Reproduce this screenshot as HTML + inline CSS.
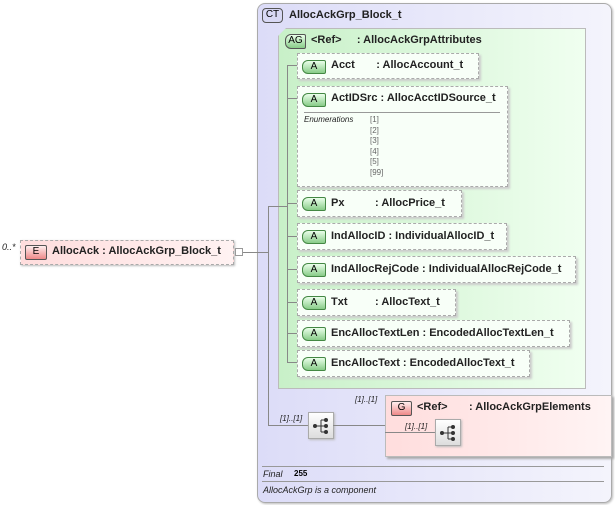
<!DOCTYPE html>
<html><head><style>
body{margin:0;width:615px;height:505px;background:#fff;font-family:"Liberation Sans",sans-serif;position:relative;overflow:hidden}
.a{position:absolute}
.b{font-weight:bold;font-size:11px;color:#222}
.badge{position:absolute;font-size:10px;text-align:center;border:1px solid #555;line-height:12px}
.attr{position:absolute;border:1px dashed #aaa;background:#f8fff8;box-shadow:2px 2px 2px #ccc}
.ab{position:absolute;left:4px;top:6px;width:22px;height:12px;border:1px solid #484;border-radius:6px 2px 2px 6px;background:linear-gradient(#eaffea,#8c8);font-size:10px;text-align:center;line-height:12px}
.hl{position:absolute;height:1px;background:#888}
.vl{position:absolute;width:1px;background:#888}
.it{font-style:italic;font-size:8px;color:#222;position:absolute}
.seq{position:absolute;width:24px;height:25px;border:1px solid #aaa;background:linear-gradient(#fff,#ddd);box-shadow:1px 1px 2px #bbb}
</style></head><body>
<svg width="0" height="0" style="position:absolute"><defs><g id="sq"><line x1="6" y1="13" x2="12" y2="13" stroke="#333"/><line x1="12" y1="7" x2="12" y2="19" stroke="#333"/><line x1="12" y1="7" x2="16" y2="7" stroke="#333"/><line x1="12" y1="13" x2="16" y2="13" stroke="#333"/><line x1="12" y1="19" x2="16" y2="19" stroke="#333"/><circle cx="6" cy="13" r="2" fill="#333"/><circle cx="17" cy="7" r="2" fill="#333"/><circle cx="17" cy="13" r="2" fill="#333"/><circle cx="17" cy="19" r="2" fill="#333"/></g></defs></svg>
<div class="a" style="left:257px;top:3px;width:353px;height:498px;border:1px solid #aaa;border-radius:8px;background:linear-gradient(90deg,#dcdcf8,#f4f4fc);box-shadow:1px 1px 2px #bbb"></div>
<div class="badge" style="left:262px;top:8px;width:19px;height:13px;border-radius:4px;background:#d8d8f4">CT</div>
<div class="a b" style="left:289px;top:9px">AllocAckGrp_Block_t</div>
<div class="a" style="left:278px;top:28px;width:306px;height:359px;border:1px solid #bbb;background:linear-gradient(90deg,#c8f0c8,#f0fff0);box-shadow:3px 3px 2px #bbb;clip-path:polygon(8px 0,100% 0,100% 100%,0 100%,0 8px)"></div>
<div class="badge" style="left:285px;top:34px;width:19px;height:13px;border-radius:6px 2px 2px 6px;background:linear-gradient(#eaffea,#8c8)">AG</div>
<div class="a b" style="left:311px;top:34px">&lt;Ref&gt;&nbsp;&nbsp;&nbsp;&nbsp;&nbsp;: AllocAckGrpAttributes</div>
<div class="vl" style="left:287px;top:65px;height:297px"></div>
<div class="attr" style="left:297px;top:53px;width:180px;height:24px"><div class="ab">A</div><div class="a b" style="left:33px;top:5px">Acct&nbsp;&nbsp;&nbsp;&nbsp;&nbsp;&nbsp;&nbsp;: AllocAccount_t</div></div>
<div class="hl" style="left:287px;top:65px;width:10px"></div>
<div class="attr" style="left:297px;top:86px;width:209px;height:99px"><div class="ab">A</div><div class="a b" style="left:33px;top:5px">ActIDSrc : AllocAcctIDSource_t</div>
<div class="hl" style="left:6px;top:25px;width:196px;background:#999"></div>
<div class="it" style="left:6px;top:28px">Enumerations</div>
<div class="a" style="left:72px;top:28px;font-size:8px;color:#666;line-height:10.6px">[1]<br>[2]<br>[3]<br>[4]<br>[5]<br>[99]</div></div>
<div class="hl" style="left:287px;top:98px;width:10px"></div>
<div class="attr" style="left:297px;top:190px;width:163px;height:25px"><div class="ab">A</div><div class="a b" style="left:33px;top:6px">Px&nbsp;&nbsp;&nbsp;&nbsp;&nbsp;&nbsp;&nbsp;&nbsp;&nbsp;&nbsp;: AllocPrice_t</div></div>
<div class="hl" style="left:287px;top:203px;width:10px"></div>
<div class="attr" style="left:297px;top:223px;width:208px;height:25px"><div class="ab">A</div><div class="a b" style="left:33px;top:6px">IndAllocID : IndividualAllocID_t</div></div>
<div class="hl" style="left:287px;top:236px;width:10px"></div>
<div class="attr" style="left:297px;top:256px;width:277px;height:25px"><div class="ab">A</div><div class="a b" style="left:33px;top:6px">IndAllocRejCode : IndividualAllocRejCode_t</div></div>
<div class="hl" style="left:287px;top:269px;width:10px"></div>
<div class="attr" style="left:297px;top:289px;width:157px;height:25px"><div class="ab">A</div><div class="a b" style="left:33px;top:6px">Txt&nbsp;&nbsp;&nbsp;&nbsp;&nbsp;&nbsp;&nbsp;&nbsp;&nbsp;: AllocText_t</div></div>
<div class="hl" style="left:287px;top:302px;width:10px"></div>
<div class="attr" style="left:297px;top:320px;width:271px;height:25px"><div class="ab">A</div><div class="a b" style="left:33px;top:6px">EncAllocTextLen : EncodedAllocTextLen_t</div></div>
<div class="hl" style="left:287px;top:333px;width:10px"></div>
<div class="attr" style="left:297px;top:350px;width:231px;height:25px"><div class="ab">A</div><div class="a b" style="left:33px;top:6px">EncAllocText : EncodedAllocText_t</div></div>
<div class="hl" style="left:287px;top:362px;width:10px"></div>
<div class="vl" style="left:268px;top:206px;height:219px"></div>
<div class="hl" style="left:268px;top:206px;width:19px"></div>
<div class="hl" style="left:268px;top:425px;width:40px"></div>
<div class="it" style="left:280px;top:414px">[1]..[1]</div>
<div class="seq" style="left:308px;top:412px"><svg width="24" height="25"><use href="#sq"/></svg></div>
<div class="hl" style="left:333px;top:425px;width:52px"></div>
<div class="it" style="left:355px;top:395px">[1]..[1]</div>
<div class="a" style="left:385px;top:395px;width:225px;height:60px;border:1px solid #bbb;background:linear-gradient(90deg,#fdd,#fff4f4);box-shadow:2px 2px 2px #aaa"></div>
<div class="badge" style="left:391px;top:401px;width:19px;height:13px;border-radius:2px;background:linear-gradient(#fee,#e88)">G</div>
<div class="a b" style="left:417px;top:401px">&lt;Ref&gt;&nbsp;&nbsp;&nbsp;&nbsp;&nbsp;&nbsp;&nbsp;: AllocAckGrpElements</div>
<div class="it" style="left:405px;top:422px">[1]..[1]</div>
<div class="hl" style="left:385px;top:432px;width:50px"></div>
<div class="seq" style="left:435px;top:419px"><svg width="24" height="25"><use href="#sq"/></svg></div>
<div class="hl" style="left:262px;top:466px;width:342px;background:#999"></div>
<div class="it" style="left:263px;top:469px;font-size:9px">Final</div>
<div class="a" style="left:294px;top:469px;font-size:8px;font-weight:bold">255</div>
<div class="hl" style="left:262px;top:481px;width:342px;background:#999"></div>
<div class="it" style="left:263px;top:485px;font-size:9px">AllocAckGrp is a component</div>
<div class="it" style="left:2px;top:242px;font-size:9px">0..*</div>
<div class="a" style="left:20px;top:240px;width:212px;height:23px;border:1px dashed #aaa;background:linear-gradient(90deg,#fdd,#fff2f2);box-shadow:1px 1px 2px #bbb"></div>
<div class="badge" style="left:25px;top:245px;width:20px;height:13px;border-radius:2px;background:linear-gradient(#fee,#e88)">E</div>
<div class="a b" style="left:52px;top:245px">AllocAck : AllocAckGrp_Block_t</div>
<div class="a" style="left:235px;top:248px;width:6px;height:6px;border:1px solid #999;background:#fff"></div>
<div class="hl" style="left:243px;top:252px;width:25px"></div>
</body></html>
